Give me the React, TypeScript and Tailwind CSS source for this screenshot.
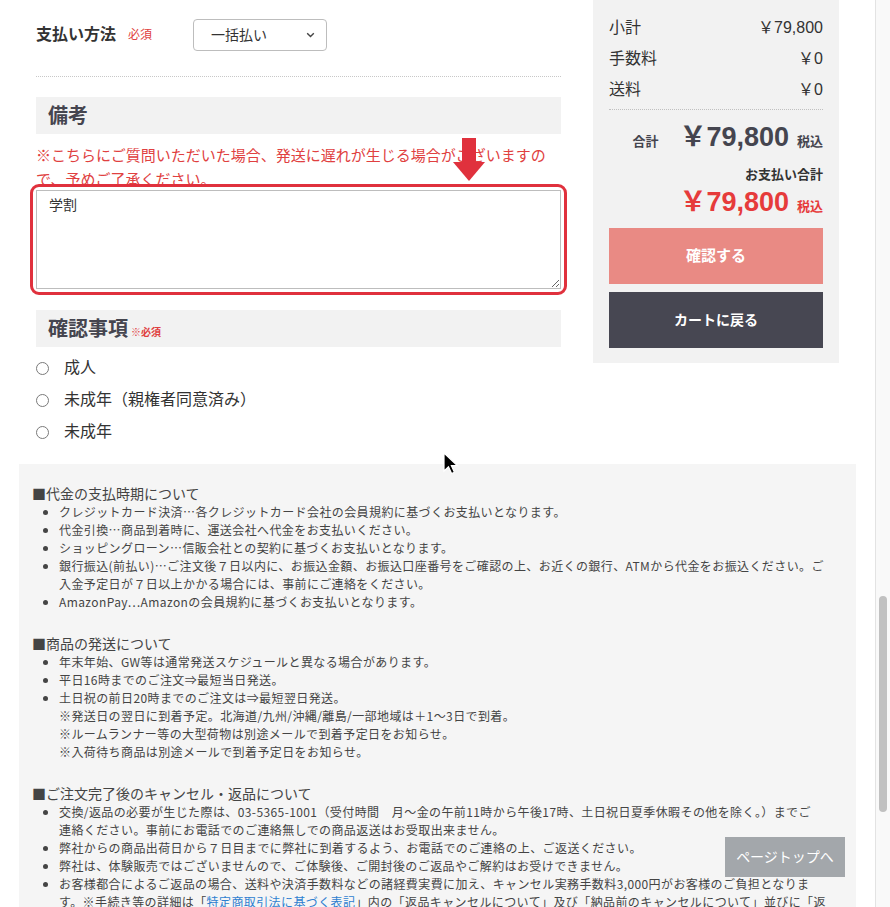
import React from 'react'

const font = '[font-family:"Liberation_Sans","Noto_Sans_CJK_JP",sans-serif]'

const Radio = ({ label }: { label: string }) => (
  <div className="flex h-[32px] items-center gap-[15px]">
    <span className="h-[13px] w-[13px] rounded-full border border-[#7a7a7a] bg-white" />
    <span className="text-[16px] text-[#333]">{label}</span>
  </div>
)

const SummaryRow = ({ label, value }: { label: string; value: string }) => (
  <div className="flex h-[31px] items-center justify-between text-[16px] text-[#333]">
    <span>{label}</span>
    <span>{value}</span>
  </div>
)

const App: React.FC = () => {
  return (
    <div className={`relative flex h-[907px] w-[890px] overflow-hidden bg-white ${font}`}>
      <div className="w-[875px]">
        {/* Form + summary */}
        <div className="mx-auto flex w-[837px] gap-[32px] px-[17px]">
          <div className="w-[525px] pt-[19px]">
            {/* Payment method */}
            <div className="flex h-[32px] items-center">
              <div className="flex w-[157px] items-center">
                <span className="text-[16px] font-bold text-[#333]">支払い方法</span>
                <span className="ml-[12px] text-[12px] text-[#e04040]">必須</span>
              </div>
              <div className="flex h-[32px] w-[134px] items-center justify-between rounded-[4px] border border-[#bdbdbd] bg-white pl-[17px] pr-[11px]">
                <span className="text-[14px] text-[#333]">一括払い</span>
                <svg width="9" height="6" viewBox="0 0 9 6">
                  <path d="M1.2 1.2 L4.5 4.5 L7.8 1.2" fill="none" stroke="#444" strokeWidth="1.4" />
                </svg>
              </div>
            </div>

            <div className="mt-[25px] border-t border-dotted border-[#c8c8c8]" />

            {/* Remarks */}
            <div className="mt-[20px] flex h-[37px] items-center bg-[#f2f2f2] pl-[12px]">
              <span className="text-[20px] font-bold text-[#45454f]">備考</span>
            </div>
            <div className="relative">
              <p className="mt-[10px] w-[520px] text-[15px] leading-[24px] text-[#e04040]">
                ※こちらにご質問いただいた場合、発送に遅れが生じる場合がございますの
                <br />
                で、予めご了承ください。
              </p>
              {/* annotation arrow */}
              <svg className="absolute left-[417px] top-[-6px]" width="34" height="44" viewBox="0 0 34 44">
                <rect x="9" y="0" width="14" height="26" fill="#e0313d" />
                <polygon points="0,24 32,24 16,43" fill="#e0313d" />
              </svg>
            </div>
            <div className="relative -mt-[2px]">
              <textarea
                defaultValue="学割"
                className="block h-[99px] w-[525px] resize-y border border-[#bdbdbd] bg-white px-[12px] pb-[6px] pt-[4px] text-[14px] text-[#333] outline-none"
              />
              <div className="pointer-events-none absolute -inset-[6px] rounded-[9px] border-[3px] border-[#e0313d]" />
            </div>

            {/* Confirmation */}
            <div className="mt-[21px] flex h-[37px] items-end bg-[#f2f2f2] pb-[5px] pl-[12px]">
              <span className="text-[20px] font-bold leading-[26px] text-[#45454f]">確認事項</span>
              <span className="mb-[3px] ml-[3px] text-[10px] font-bold leading-[12px] text-[#e04040]">※必須</span>
            </div>
            <div className="mt-[5px]">
              <Radio label="成人" />
              <Radio label="未成年（親権者同意済み）" />
              <Radio label="未成年" />
            </div>
          </div>

          {/* Summary */}
          <div className="w-[246px] self-start bg-[#f2f2f2] px-[16px] pb-[15px] pt-[12px]">
            <SummaryRow label="小計" value="￥79,800" />
            <SummaryRow label="手数料" value="￥0" />
            <SummaryRow label="送料" value="￥0" />
            <div className="mt-[4px] border-t border-dotted border-[#c0c0c0]" />
            <div className="mt-[9px] flex h-[36px] items-baseline justify-end text-[#45454f]">
              <span className="text-[13px] font-bold">合計</span>
              <span className="ml-[21px] text-[27px] font-bold leading-[36px]">￥79,800</span>
              <span className="ml-[8px] text-[13px] font-bold">税込</span>
            </div>
            <div className="mt-[11px] text-right text-[13px] font-bold leading-[18px] text-[#333]">お支払い合計</div>
            <div className="flex h-[36px] items-baseline justify-end text-[#e63b3b]">
              <span className="text-[27px] font-bold leading-[36px]">￥79,800</span>
              <span className="ml-[8px] text-[13px] font-bold">税込</span>
            </div>
            <button className="mt-[8px] flex h-[56px] w-full items-center justify-center bg-[#e98a84] text-[15px] font-bold text-white">
              確認する
            </button>
            <button className="mt-[8px] flex h-[56px] w-full items-center justify-center bg-[#474752] text-[14px] font-bold text-white">
              カートに戻る
            </button>
          </div>
        </div>

        {/* Notes */}
        <div className='mx-auto mt-[16px] h-[600px] w-[837px] bg-[#f5f5f5] pl-[13px] pr-[6px] pt-[20px] text-[#444] [font-family:"Noto_Sans_CJK_JP",sans-serif]'>
          <section>
            <h3 className="text-[14px] leading-[19px]">■代金の支払時期について</h3>
            <ul className="list-disc pl-[27px] text-[12px] leading-[18px] tracking-[0.4px]">
              <li>クレジットカード決済…各クレジットカード会社の会員規約に基づくお支払いとなります。</li>
              <li>代金引換…商品到着時に、運送会社へ代金をお支払いください。</li>
              <li>ショッピングローン…信販会社との契約に基づくお支払いとなります。</li>
              <li>
                銀行振込(前払い)…ご注文後７日以内に、お振込金額、お振込口座番号をご確認の上、お近くの銀行、ATMから代金をお振込ください。ご
                <br />
                入金予定日が７日以上かかる場合には、事前にご連絡をください。
              </li>
              <li>AmazonPay…Amazonの会員規約に基づくお支払いとなります。</li>
            </ul>
          </section>
          <section className="mt-[23px]">
            <h3 className="text-[14px] leading-[19px]">■商品の発送について</h3>
            <ul className="list-disc pl-[27px] text-[12px] leading-[18px] tracking-[0.4px]">
              <li>年末年始、GW等は通常発送スケジュールと異なる場合があります。</li>
              <li>平日16時までのご注文⇒最短当日発送。</li>
              <li>
                土日祝の前日20時までのご注文は⇒最短翌日発送。
                <br />
                ※発送日の翌日に到着予定。北海道/九州/沖縄/離島/一部地域は＋1～3日で到着。
                <br />
                ※ルームランナー等の大型荷物は別途メールで到着予定日をお知らせ。
                <br />
                ※入荷待ち商品は別途メールで到着予定日をお知らせ。
              </li>
            </ul>
          </section>
          <section className="mt-[23px]">
            <h3 className="text-[14px] leading-[19px]">■ご注文完了後のキャンセル・返品について</h3>
            <ul className="list-disc pl-[27px] text-[12px] leading-[18px] tracking-[0.4px]">
              <li>
                交換/返品の必要が生じた際は、03-5365-1001（受付時間　月～金の午前11時から午後17時、土日祝日夏季休暇その他を除く。）までご
                <br />
                連絡ください。事前にお電話でのご連絡無しでの商品返送はお受取出来ません。
              </li>
              <li>弊社からの商品出荷日から７日目までに弊社に到着するよう、お電話でのご連絡の上、ご返送ください。</li>
              <li>弊社は、体験販売ではございませんので、ご体験後、ご開封後のご返品やご解約はお受けできません。</li>
              <li>
                お客様都合によるご返品の場合、送料や決済手数料などの諸経費実費に加え、キャンセル実務手数料3,000円がお客様のご負担となりま
                <br />
                す。※手続き等の詳細は「<a className="text-[#2f7fd0]">特定商取引法に基づく表記</a>」内の「返品キャンセルについて」及び「納品前のキャンセルについて」並びに「返
                <br />
                品・交換について」をご確認ください。
              </li>
            </ul>
          </section>
        </div>
      </div>

      {/* Scrollbar */}
      <div className="w-[15px] border-l border-[#e3e3e3] bg-[#f9f9f9] pt-[596px]">
        <div className="mx-auto h-[216px] w-[8px] rounded-full bg-[#c1c1c1]" />
      </div>

      {/* Page top button */}
      <div className="absolute left-[725px] top-[837px] flex h-[40px] w-[120px] items-center justify-center bg-[#a3a7ab] text-[14px] text-white">
        ページトップへ
      </div>

      {/* Mouse cursor */}
      <svg className="absolute left-[443px] top-[452px]" width="16" height="24" viewBox="0 0 16 24">
        <path d="M1 1 L1 19 L5.5 14.8 L8.6 21.5 L11.4 20.2 L8.4 13.7 L14.5 13.7 Z" fill="#000" stroke="#fff" strokeWidth="1.2" />
      </svg>
    </div>
  )
}

export default App
